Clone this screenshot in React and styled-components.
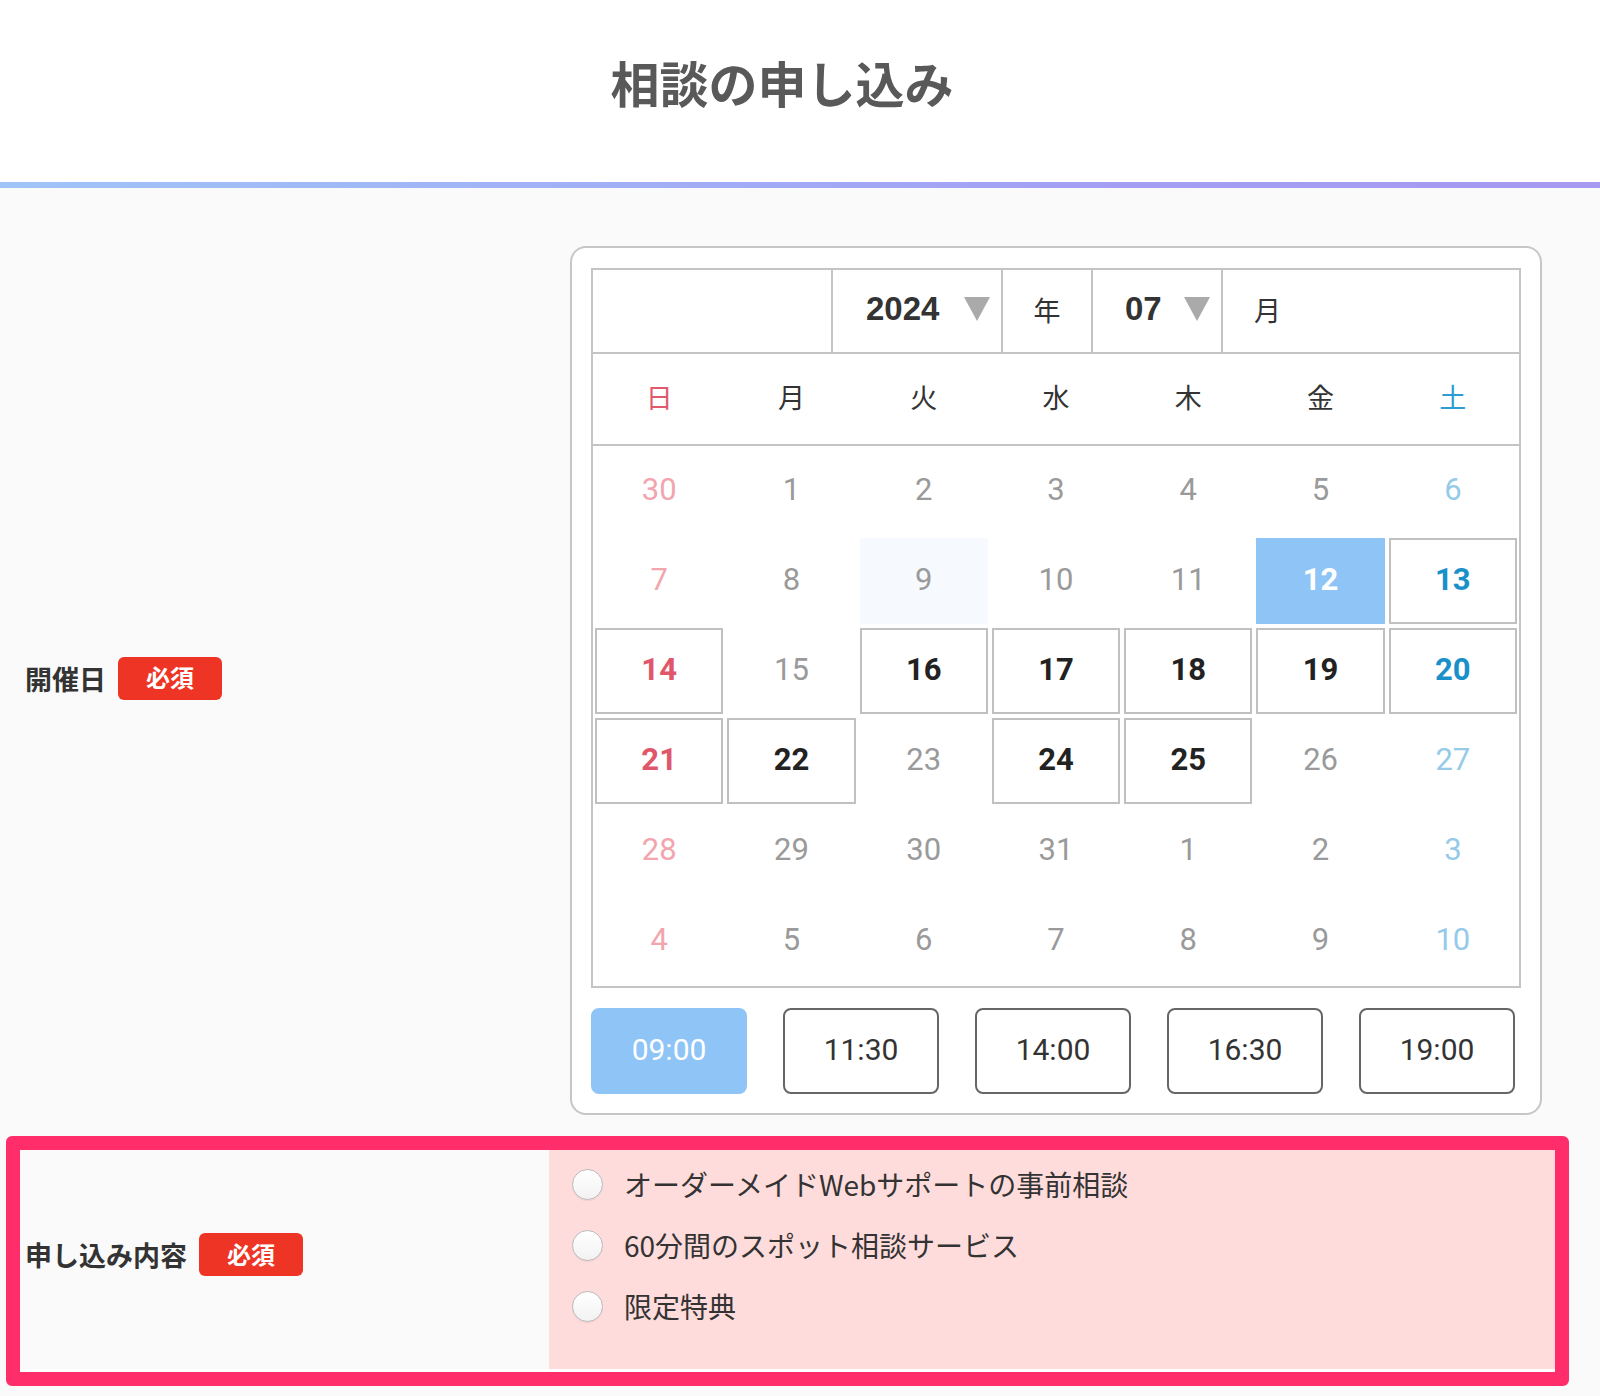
import React from 'react';
import styled, { createGlobalStyle } from 'styled-components';

const GlobalStyle = createGlobalStyle`
  html, body { margin: 0; padding: 0; }
  body {
    background: #fafafa;
    font-family: "Noto Sans CJK JP", "Noto Sans", sans-serif;
    color: #333;
  }
  *, *::before, *::after { box-sizing: border-box; }
`;

const Page = styled.div`
  min-height: 1396px;
  background: #fafafa;
`;

const Header = styled.header`
  height: 182px;
  background: #fff;
  display: flex;
  align-items: center;
  justify-content: center;
  padding: 0 36px 17px 0;
`;

const Title = styled.h1`
  margin: 0;
  font-size: 49px;
  font-weight: 700;
  color: #595959;
  line-height: 1.2;
`;

const GradientRule = styled.div`
  height: 6px;
  background: linear-gradient(90deg, #a0c4f8 0%, #a39ef4 70%, #a699f2 100%);
`;

const FieldRow = styled.section`
  display: grid;
  grid-template-columns: 549px 1fr;
  padding: 58px 0 21px;
`;

const FieldLabel = styled.div`
  display: flex;
  align-items: center;
  gap: 12px;
  padding-left: ${(p) => p.$indent}px;
  padding-bottom: ${(p) => p.$lift || 0}px;
  font-size: 27px;
  font-weight: 700;
  color: #333;
  background: #fafafa;
`;

const Badge = styled.span`
  display: inline-flex;
  align-items: center;
  justify-content: center;
  width: 104px;
  height: 43px;
  padding-bottom: 3px;
  border-radius: 6px;
  background: #ee3424;
  color: #fff;
  font-size: 24px;
  font-weight: 700;
`;

const FieldBody = styled.div`
  padding-left: 21px;
`;

const Card = styled.div`
  width: 972px;
  background: #fff;
  border: 2px solid #c6c6c6;
  border-radius: 16px;
  padding: 20px 19px 19px;
`;

const CalTable = styled.div`
  border: 2px solid #c4c4c4;
  background: #fff;
`;

const MonthBar = styled.div`
  display: grid;
  grid-template-columns: 238px 170px 90px 130px 1fr;
  height: 84px;
  border-bottom: 2px solid #c4c4c4;
`;

const MonthCell = styled.div`
  display: flex;
  align-items: center;
  justify-content: ${(p) => p.$justify || 'flex-start'};
  padding: ${(p) => p.$pad || '0'};
  padding-bottom: 4px;
  border-left: ${(p) => (p.$first ? 'none' : '2px solid #c4c4c4')};
  font-size: 27px;
  color: #333;
`;

const SelectValue = styled.span`
  font-family: "Liberation Sans", Arial, sans-serif;
  font-weight: 700;
  font-size: 33px;
  color: #333;
`;

const Caret = styled.span`
  width: 0;
  height: 0;
  border-left: 13.5px solid transparent;
  border-right: 13.5px solid transparent;
  border-top: 24px solid #aaa;
`;

const WeekRow = styled.div`
  display: grid;
  grid-template-columns: repeat(7, 1fr);
  column-gap: 4px;
  padding: 0 2px;
  height: 92px;
  border-bottom: 2px solid #c4c4c4;
`;

const WeekDay = styled.div`
  display: flex;
  align-items: center;
  justify-content: center;
  padding-bottom: 5px;
  font-size: 27px;
  color: ${(p) => (p.$col === 0 ? '#e05a6b' : p.$col === 6 ? '#2b9dd4' : '#333')};
`;

const DayGrid = styled.div`
  display: grid;
  grid-template-columns: repeat(7, 1fr);
  grid-auto-rows: 86px;
  gap: 4px;
  padding: 2px;
`;

const dayColor = (state, col) => {
  if (state === 'selected') return '#fff';
  if (state === 'on') {
    if (col === 0) return '#e0566a';
    if (col === 6) return '#1a90c9';
    return '#222';
  }
  if (col === 0) return '#f2a5ae';
  if (col === 6) return '#95cbe8';
  return '#9a9a9a';
};

const DayCell = styled.div`
  display: flex;
  align-items: center;
  justify-content: center;
  padding-bottom: 4px;
  font-family: Roboto, "Liberation Sans", sans-serif;
  font-size: 31px;
  font-weight: ${(p) => (p.$state === 'on' || p.$state === 'selected' ? 700 : 400)};
  color: ${(p) => dayColor(p.$state, p.$col)};
  border: 2px solid
    ${(p) => (p.$state === 'on' ? '#c0c0c0' : p.$state === 'selected' ? '#8ec5f6' : 'transparent')};
  background: ${(p) =>
    p.$state === 'selected' ? '#8ec5f6' : p.$state === 'today' ? '#f6fafe' : 'transparent'};
`;

const TimeRow = styled.div`
  display: flex;
  justify-content: space-between;
  margin-top: 20px;
  padding-right: 6px;
`;

const TimeButton = styled.button`
  width: 156px;
  height: 86px;
  border-radius: 8px;
  border: 2px solid ${(p) => (p.$active ? '#8ec5f6' : '#666')};
  background: ${(p) => (p.$active ? '#8ec5f6' : '#fff')};
  color: ${(p) => (p.$active ? '#fff' : '#333')};
  font-family: Roboto, "Liberation Sans", sans-serif;
  font-size: 30px;
  padding: 0 0 4px;
  cursor: pointer;
`;

const HighlightRow = styled.section`
  margin: 0 31px 0 6px;
  border: 14px solid #ff2e6b;
  border-radius: 6px;
  background: #fff;
  padding-bottom: 3px;
  display: grid;
  grid-template-columns: 529px 1fr;
`;

const Options = styled.div`
  background: #ffdcdc;
  padding: 3px 0 33px 23px;
  display: flex;
  flex-direction: column;
`;

const Option = styled.label`
  display: flex;
  align-items: center;
  gap: 21px;
  height: 61px;
  font-size: 28px;
  color: #333;
  cursor: pointer;
`;

const Radio = styled.input`
  appearance: none;
  -webkit-appearance: none;
  margin: 2px 0 0;
  width: 31px;
  height: 31px;
  flex: none;
  border-radius: 50%;
  border: 1px solid #bbbbbb;
  background: linear-gradient(180deg, #ffffff 0%, #f2f2f2 100%);
  box-shadow: 0 1px 1px rgba(0, 0, 0, 0.06);
`;

const O = 'off';
const N = 'on';
const weeks = [
  [[30, O], [1, O], [2, O], [3, O], [4, O], [5, O], [6, O]],
  [[7, O], [8, O], [9, 'today'], [10, O], [11, O], [12, 'selected'], [13, N]],
  [[14, N], [15, O], [16, N], [17, N], [18, N], [19, N], [20, N]],
  [[21, N], [22, N], [23, O], [24, N], [25, N], [26, O], [27, O]],
  [[28, O], [29, O], [30, O], [31, O], [1, O], [2, O], [3, O]],
  [[4, O], [5, O], [6, O], [7, O], [8, O], [9, O], [10, O]],
];

const weekdays = ['日', '月', '火', '水', '木', '金', '土'];
const times = ['09:00', '11:30', '14:00', '16:30', '19:00'];
const options = [
  'オーダーメイドWebサポートの事前相談',
  '60分間のスポット相談サービス',
  '限定特典',
];

export default function App() {
  return (
    <Page>
      <GlobalStyle />
      <Header>
        <Title>相談の申し込み</Title>
      </Header>
      <GradientRule />

      <FieldRow>
        <FieldLabel $indent={25} $lift={5}>
          開催日<Badge>必須</Badge>
        </FieldLabel>
        <FieldBody>
          <Card>
            <CalTable>
              <MonthBar>
                <MonthCell $first />
                <MonthCell $justify="space-between" $pad="0 11px 0 33px">
                  <SelectValue>2024</SelectValue>
                  <Caret />
                </MonthCell>
                <MonthCell $justify="center">年</MonthCell>
                <MonthCell $justify="space-between" $pad="0 11px 0 32px">
                  <SelectValue>07</SelectValue>
                  <Caret />
                </MonthCell>
                <MonthCell $pad="0 0 0 31px">月</MonthCell>
              </MonthBar>
              <WeekRow>
                {weekdays.map((d, i) => (
                  <WeekDay key={d} $col={i}>
                    {d}
                  </WeekDay>
                ))}
              </WeekRow>
              <DayGrid>
                {weeks.map((week, wi) =>
                  week.map(([n, state], col) => (
                    <DayCell key={`${wi}-${col}`} $state={state} $col={col}>
                      {n}
                    </DayCell>
                  ))
                )}
              </DayGrid>
            </CalTable>
            <TimeRow>
              {times.map((t, i) => (
                <TimeButton key={t} $active={i === 0}>
                  {t}
                </TimeButton>
              ))}
            </TimeRow>
          </Card>
        </FieldBody>
      </FieldRow>

      <HighlightRow>
        <FieldLabel $indent={5} $lift={10}>
          申し込み内容<Badge>必須</Badge>
        </FieldLabel>
        <Options>
          {options.map((o) => (
            <Option key={o}>
              <Radio type="radio" name="plan" />
              {o}
            </Option>
          ))}
        </Options>
      </HighlightRow>
    </Page>
  );
}
